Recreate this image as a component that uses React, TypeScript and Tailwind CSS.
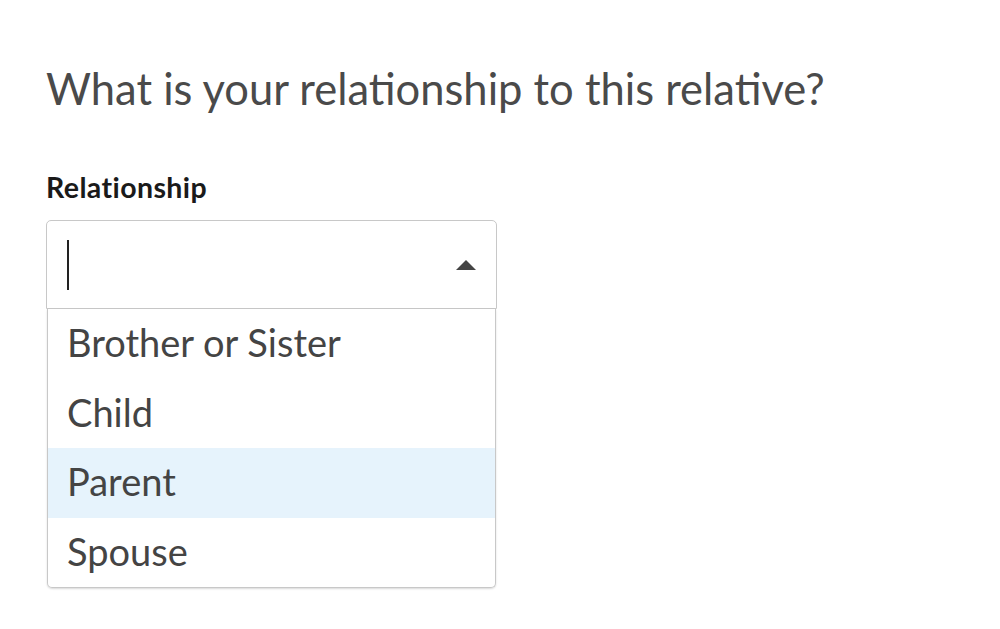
export default function App() {
  const items = ["Brother or Sister", "Child", "Parent", "Spouse"];
  return (
    <div className="w-[1000px] h-[629px] bg-white overflow-hidden" style={{ fontFamily: "Lato, 'Noto Sans', sans-serif" }}>
      <div className="pl-[46px] pt-[60px]">
        <h1 className="text-[43.5px] leading-[56px] text-[#4a4a4a] font-normal">What is your relationship to this relative?</h1>
        <div className="mt-[56px] text-[28.5px] leading-[30px] font-bold tracking-[0.4px] text-[#1a1a1a]">Relationship</div>
        <div className="mt-[18px] w-[451px]">
          <div className="h-[89px] border border-[#c8c8c8] rounded-t-[5px] flex items-center justify-between pl-[20px] pr-[20px]">
            <div className="w-[2px] h-[50px] bg-[#222]" />
            <svg width="20" height="10" viewBox="0 0 20 10"><path d="M0 10 L10 0 L20 10 Z" fill="#444" /></svg>
          </div>
          <div className="border border-t-0 border-[#c8c8c8] rounded-b-[5px] mx-[1px] overflow-hidden shadow-[0_1px_2px_rgba(0,0,0,0.15)]">
            {items.map((t) => (
              <div key={t} className={`h-[69.5px] flex items-center pl-[19px] pb-[2px] text-[38px] text-[#444] ${t === "Parent" ? "bg-[#e6f3fc]" : ""}`}>{t}</div>
            ))}
          </div>
        </div>
      </div>
    </div>
  );
}
